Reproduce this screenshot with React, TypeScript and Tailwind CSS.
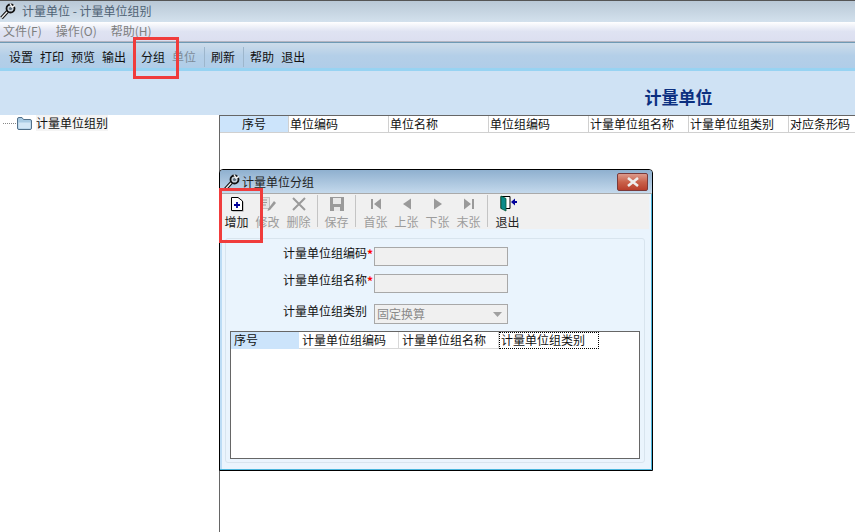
import React from "react";

const mainColumns = ["单位编码", "单位名称", "单位组编码", "计量单位组名称", "计量单位组类别", "对应条形码"];
const groupColumns = ["计量单位组编码", "计量单位组名称"];

function KeyIcon() {
  return (
    <svg width="16" height="18" viewBox="0 0 16 18" className="shrink-0">
      <path d="M1.5 16 L7.5 9.5" stroke="#111" strokeWidth="3.4" fill="none" />
      <path d="M1.5 16 L7.5 9.5" stroke="#f2f2f2" strokeWidth="1.3" fill="none" />
      <circle cx="10.5" cy="6.5" r="4" fill="#c9d3dc" stroke="#111" strokeWidth="1.8" />
      <circle cx="10.5" cy="6.5" r="1.6" fill="#5e6f7e" />
      <path d="M10 1.5 L12 5 L15 3.5" stroke="#f2f2f2" strokeWidth="1.4" fill="none" />
    </svg>
  );
}

function FolderIcon() {
  return (
    <svg width="16" height="13" viewBox="0 0 16 13" className="shrink-0">
      <path d="M1.5 2 Q1.5 0.5 3 0.5 L6 0.5 L7.5 2.5 L14 2.5 Q15.5 2.5 15.5 4 L15.5 11 Q15.5 12.5 14 12.5 L3 12.5 Q1.5 12.5 1.5 11 Z" fill="#a9cbe3" stroke="#51708a" />
      <path d="M2.5 5.5 L14.5 5.5 L14.5 11.5 L2.5 11.5 Z" fill="#d3e7f6" />
    </svg>
  );
}

function ToolIcon({ name }: { name: string }) {
  const gray = "#9a9a9a";
  if (name === "add") {
    return (
      <svg width="16" height="16" viewBox="0 0 16 16">
        <path d="M3.5 2.5 H10 L14.5 6 V15.5 H3.5 Z" fill="#999" />
        <path d="M2.5 1.5 H9 L13.5 5 V14.5 H2.5 Z" fill="#fff" stroke="#000" />
        <path d="M5 9 H11 M8 6 V12" stroke="#00009c" strokeWidth="1.8" />
      </svg>
    );
  }
  if (name === "edit") {
    return (
      <svg width="18" height="16" viewBox="0 0 18 16">
        <rect x="1.5" y="1.5" width="9" height="11" fill="#e4e4e4" stroke={gray} strokeDasharray="1 1" />
        <path d="M4 4 H8 M4 6.5 H8 M4 9 H7" stroke={gray} />
        <path d="M9 13 L15 5 L17 7 L11 14 L8.5 15 Z" fill={gray} />
      </svg>
    );
  }
  if (name === "delete") {
    return (
      <svg width="16" height="16" viewBox="0 0 16 16">
        <path d="M2 2 L14 14 M14 2 L2 14" stroke={gray} strokeWidth="2" />
      </svg>
    );
  }
  if (name === "save") {
    return (
      <svg width="16" height="16" viewBox="0 0 16 16">
        <path d="M1 1 H15 V15 H1 Z" fill={gray} />
        <rect x="4" y="2" width="8" height="6" fill="#e8e8e8" />
        <rect x="5" y="11" width="6" height="4" fill="#e8e8e8" />
      </svg>
    );
  }
  if (name === "first") {
    return (
      <svg width="14" height="14" viewBox="0 0 14 14">
        <path d="M2 2 H4 V12 H2 Z M12 1.5 V12.5 L5 7 Z" fill={gray} />
      </svg>
    );
  }
  if (name === "prev") {
    return (
      <svg width="14" height="14" viewBox="0 0 14 14">
        <path d="M11 1.5 V12.5 L3 7 Z" fill={gray} />
      </svg>
    );
  }
  if (name === "next") {
    return (
      <svg width="14" height="14" viewBox="0 0 14 14">
        <path d="M3 1.5 V12.5 L11 7 Z" fill={gray} />
      </svg>
    );
  }
  if (name === "last") {
    return (
      <svg width="14" height="14" viewBox="0 0 14 14">
        <path d="M10 2 H12 V12 H10 Z M2 1.5 V12.5 L9 7 Z" fill={gray} />
      </svg>
    );
  }
  return (
    <svg width="18" height="17" viewBox="0 0 18 17">
      <path d="M2 1.5 H11 V13.5 H2 Z" fill="#fff" stroke="#000" />
      <path d="M2 1 L7 3.5 V16 L2 13.5 Z" fill="#0b8a8a" stroke="#053" strokeWidth="0.8" />
      <path d="M12 7 L16 3.5 V10.5 Z" fill="#00009c" />
      <path d="M15 6 H18 V8 H15 Z" fill="#00009c" />
    </svg>
  );
}

function ToolButton({ icon, label, disabled }: { icon: string; label: string; disabled?: boolean }) {
  return (
    <div className="flex w-[31px] flex-col items-center">
      <div className="flex h-[17px] items-center justify-center">
        <ToolIcon name={icon} />
      </div>
      <span className={`mt-[3px] text-[12px] leading-[14px] whitespace-nowrap ${disabled ? "text-[#9c9c9c]" : "text-[#222]"}`}>{label}</span>
    </div>
  );
}

function FormRow({ label, required, children, className }: { label: string; required?: boolean; children: React.ReactNode; className?: string }) {
  return (
    <div className={`flex items-center ${className ?? ""}`}>
      <span className="mb-[6px] w-[137px] text-right text-[12px] leading-[14px] text-[#111]">{label}</span>
      <span className="mb-[4px] w-[7px] text-[12px] leading-[14px] font-bold text-[#f00]">{required ? "*" : ""}</span>
      {children}
    </div>
  );
}

export default function App() {
  return (
    <div className="relative flex h-[532px] w-[855px] flex-col overflow-hidden bg-white font-['Noto_Sans_CJK_SC','Liberation_Sans',sans-serif] text-[12px]">
      {/* window title */}
      <div className="flex h-[22px] items-center gap-[6px] border-t border-[#555] bg-gradient-to-b from-[#b9c8d6] to-[#d3e1ed] pb-[2px]">
        <KeyIcon />
        <span className="text-[12px] text-[#4f6274]">计量单位 - 计量单位组别</span>
      </div>

      {/* menu */}
      <div className="flex h-[20px] items-center gap-[14px] border-b border-[#b4b4c0] bg-gradient-to-b from-[#ffffff] via-[#dfe3f2] to-[#dcdff0] pb-[2px] pl-[3px] text-[#7f7f7f]">
        <span>文件(F)</span>
        <span>操作(O)</span>
        <span>帮助(H)</span>
      </div>

      {/* toolbar */}
      <div className="flex h-[29px] items-center border-t border-b-[3px] border-t-[#6f9ab5] border-b-[#97d3f2] bg-gradient-to-b from-[#cddcea] via-[#b4cfe8] to-[#b0cde8] pt-[2px] pl-[9px] text-[#111]">
        <span>设置</span>
        <span className="ml-[7px]">打印</span>
        <span className="ml-[7px]">预览</span>
        <span className="ml-[7px]">输出</span>
        <span className="ml-[15px]">分组</span>
        <span className="ml-[7px] text-[#7d8b98]">单位</span>
        <div className="ml-[8px] h-[20px] w-px bg-[#9db6cc]" />
        <span className="ml-[6px]">刷新</span>
        <div className="ml-[8px] h-[20px] w-px bg-[#9db6cc]" />
        <span className="ml-[6px]">帮助</span>
        <span className="ml-[7px]">退出</span>
      </div>

      {/* page heading */}
      <div className="flex h-[44px] items-center justify-center bg-[#cfe2f4] pt-[7px] pl-[502px] text-[17px] leading-[20px] font-bold text-[#0b2f80]">
        计量单位
      </div>

      {/* body */}
      <div className="flex min-h-0 flex-1">
        <div className="flex h-[16px] w-[219px] shrink-0 items-center pl-[3px]">
          <div className="w-[13px] border-t border-dotted border-[#888]" />
          <FolderIcon />
          <span className="ml-[4px] bg-[#f4f4f4] leading-[16px] text-[#111]">计量单位组别</span>
        </div>
        <div className="min-w-0 flex-1 border-l border-[#666]">
          <div className="flex h-[18px] overflow-hidden border-t border-b border-t-[#666] border-b-[#d0d0d0] text-[#111]">
            <div className="w-[68px] shrink-0 bg-[#cce4fb] text-center leading-[16px]">序号</div>
            {mainColumns.map((col) => (
              <div key={col} className="w-[100px] shrink-0 border-l border-[#d0d0d0] pl-[1px] leading-[16px] whitespace-nowrap">
                {col}
              </div>
            ))}
          </div>
        </div>
      </div>

      {/* dialog */}
      <div className="absolute top-[169px] left-[219px] flex h-[302px] w-[434px] flex-col rounded-t-[4px] border border-black bg-[#eaf4fd] shadow-[inset_-1px_-1px_0_#49b5dc,inset_2px_0_0_#bcdcf5]">
        <div className="flex h-[24px] items-center justify-between rounded-t-[3px] border-b border-[#aaa] bg-gradient-to-b from-[#8fb0cf] to-[#c4d9ec] pr-[4px] pl-[4px]">
          <div className="flex items-center gap-[2px]">
            <KeyIcon />
            <span className="text-[12px] text-[#222]">计量单位分组</span>
          </div>
          <div className="flex h-[18px] w-[31px] items-center justify-center rounded-[2px] border border-[#7a3a3a] bg-gradient-to-b from-[#dc9a8c] via-[#c9614a] to-[#b83f2c]">
            <svg width="14" height="10" viewBox="0 0 14 10">
              <path d="M2 1 L12 9 M12 1 L2 9" stroke="#eee" strokeWidth="2.6" />
            </svg>
          </div>
        </div>

        <div className="mr-[3px] flex h-[35px] items-start bg-[#f0f0f0] pt-[1px] pl-[1px]">
          <ToolButton icon="add" label="增加" />
          <ToolButton icon="edit" label="修改" disabled />
          <ToolButton icon="delete" label="删除" disabled />
          <div className="mx-[3px] h-[32px] w-px bg-[#c4c4c4]" />
          <ToolButton icon="save" label="保存" disabled />
          <div className="mr-[4px] ml-[3px] h-[32px] w-px bg-[#c4c4c4]" />
          <ToolButton icon="first" label="首张" disabled />
          <ToolButton icon="prev" label="上张" disabled />
          <ToolButton icon="next" label="下张" disabled />
          <ToolButton icon="last" label="末张" disabled />
          <div className="mr-[4px] ml-[3px] h-[32px] w-px bg-[#c4c4c4]" />
          <ToolButton icon="exit" label="退出" />
        </div>

        <div className="mx-[5px] mt-[9px] flex h-[225px] w-[420px] flex-col rounded-[3px] border border-[#d8e4ee] pt-[7px] pl-[4px]">
          <FormRow label="计量单位组编码" required>
            <div className="h-[19px] w-[134px] border border-[#a8a8a8] bg-[#f0f0f0]" />
          </FormRow>
          <FormRow label="计量单位组名称" required className="mt-[7px]">
            <div className="h-[19px] w-[134px] border border-[#a8a8a8] bg-[#f0f0f0]" />
          </FormRow>
          <FormRow label="计量单位组类别" className="mt-[11px]">
            <div className="flex h-[20px] w-[134px] items-center justify-between border border-[#a8a8a8] bg-[#f0f0f0] pr-[5px] pl-[2px] text-[#8a8a8a]">
              <span>固定换算</span>
              <svg width="9" height="5" viewBox="0 0 9 5">
                <path d="M0 0 H9 L4.5 5 Z" fill="#a0a0a0" />
              </svg>
            </div>
          </FormRow>
          <div className="mt-[7px] h-[128px] w-[410px] border border-[#666] bg-white">
            <div className="flex h-[17px] text-[#111]">
              <div className="w-[68px] bg-[#cce4fb] pl-[3px] leading-[16px]">序号</div>
              {groupColumns.map((col) => (
                <div key={col} className="w-[100px] border-r border-b border-[#d8d8d8] pl-[3px] leading-[16px]">
                  {col}
                </div>
              ))}
              <div className="w-[100px] border border-dotted border-black pl-[1px] leading-[14px]">计量单位组类别</div>
            </div>
          </div>
        </div>
      </div>

      {/* red annotation boxes */}
      <div className="absolute top-[37px] left-[133px] h-[42px] w-[46px] border-[3px] border-[#f03c3c]" />
      <div className="absolute top-[188px] left-[219px] h-[55px] w-[44px] border-[3px] border-[#f03c3c]" />
    </div>
  );
}
